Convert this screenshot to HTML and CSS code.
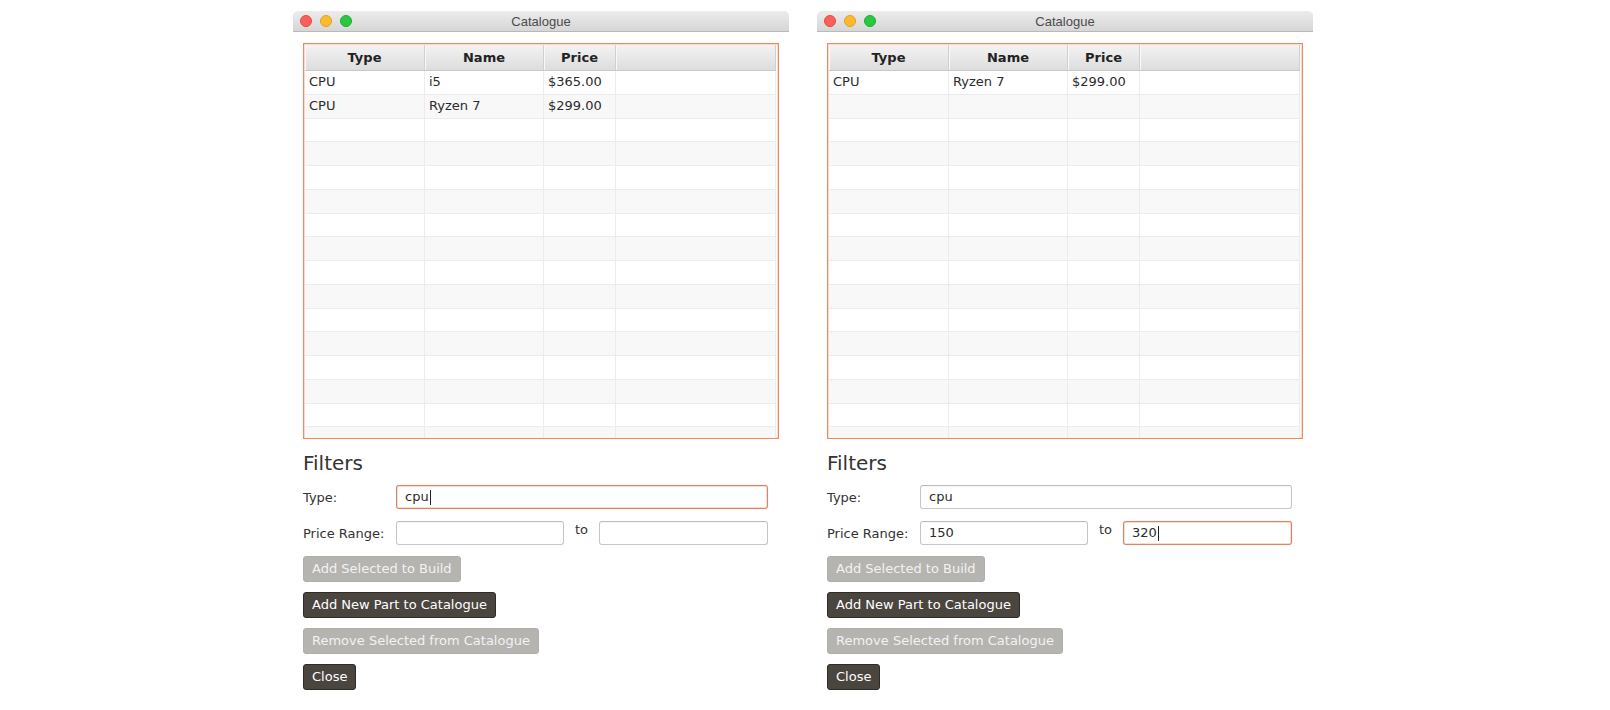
FILE: index.html
```html
<!DOCTYPE html>
<html>
<head>
<meta charset="utf-8">
<title>Catalogue</title>
<link rel="stylesheet" href="styles.css">
</head>
<body>
<div class="desktop">

  <div class="window">
    <div class="titlebar">
      <div class="lights"><span class="light red"></span><span class="light yellow"></span><span class="light green"></span></div>
      <div class="title">Catalogue</div>
    </div>
    <div class="content">
      <div class="table">
        <div class="thead">
          <div class="th">Type</div><div class="th">Name</div><div class="th">Price</div><div class="th"></div>
        </div>
        <div class="tbody">
          <div class="tr"><div class="td">CPU</div><div class="td">i5</div><div class="td">$365.00</div><div class="td"></div></div>
          <div class="tr"><div class="td">CPU</div><div class="td">Ryzen 7</div><div class="td">$299.00</div><div class="td"></div></div>
          <div class="tr"><div class="td"></div><div class="td"></div><div class="td"></div><div class="td"></div></div>
          <div class="tr"><div class="td"></div><div class="td"></div><div class="td"></div><div class="td"></div></div>
          <div class="tr"><div class="td"></div><div class="td"></div><div class="td"></div><div class="td"></div></div>
          <div class="tr"><div class="td"></div><div class="td"></div><div class="td"></div><div class="td"></div></div>
          <div class="tr"><div class="td"></div><div class="td"></div><div class="td"></div><div class="td"></div></div>
          <div class="tr"><div class="td"></div><div class="td"></div><div class="td"></div><div class="td"></div></div>
          <div class="tr"><div class="td"></div><div class="td"></div><div class="td"></div><div class="td"></div></div>
          <div class="tr"><div class="td"></div><div class="td"></div><div class="td"></div><div class="td"></div></div>
          <div class="tr"><div class="td"></div><div class="td"></div><div class="td"></div><div class="td"></div></div>
          <div class="tr"><div class="td"></div><div class="td"></div><div class="td"></div><div class="td"></div></div>
          <div class="tr"><div class="td"></div><div class="td"></div><div class="td"></div><div class="td"></div></div>
          <div class="tr"><div class="td"></div><div class="td"></div><div class="td"></div><div class="td"></div></div>
          <div class="tr"><div class="td"></div><div class="td"></div><div class="td"></div><div class="td"></div></div>
          <div class="tr"><div class="td"></div><div class="td"></div><div class="td"></div><div class="td"></div></div>
          <div class="tr"><div class="td"></div><div class="td"></div><div class="td"></div><div class="td"></div></div>
        </div>
      </div>
      <div class="filters-title">Filters</div>
      <div class="form">
        <div class="label">Type:</div>
        <div class="field wide focused">cpu<span class="caret"></span></div>
        <div class="label">Price Range:</div>
        <div class="field"></div>
        <div class="to">to</div>
        <div class="field"></div>
      </div>
      <div class="actions">
        <div class="btn disabled">Add Selected to Build</div>
        <div class="btn">Add New Part to Catalogue</div>
        <div class="btn disabled">Remove Selected from Catalogue</div>
        <div class="btn">Close</div>
      </div>
    </div>
  </div>

  <div class="window">
    <div class="titlebar">
      <div class="lights"><span class="light red"></span><span class="light yellow"></span><span class="light green"></span></div>
      <div class="title">Catalogue</div>
    </div>
    <div class="content">
      <div class="table">
        <div class="thead">
          <div class="th">Type</div><div class="th">Name</div><div class="th">Price</div><div class="th"></div>
        </div>
        <div class="tbody">
          <div class="tr"><div class="td">CPU</div><div class="td">Ryzen 7</div><div class="td">$299.00</div><div class="td"></div></div>
          <div class="tr"><div class="td"></div><div class="td"></div><div class="td"></div><div class="td"></div></div>
          <div class="tr"><div class="td"></div><div class="td"></div><div class="td"></div><div class="td"></div></div>
          <div class="tr"><div class="td"></div><div class="td"></div><div class="td"></div><div class="td"></div></div>
          <div class="tr"><div class="td"></div><div class="td"></div><div class="td"></div><div class="td"></div></div>
          <div class="tr"><div class="td"></div><div class="td"></div><div class="td"></div><div class="td"></div></div>
          <div class="tr"><div class="td"></div><div class="td"></div><div class="td"></div><div class="td"></div></div>
          <div class="tr"><div class="td"></div><div class="td"></div><div class="td"></div><div class="td"></div></div>
          <div class="tr"><div class="td"></div><div class="td"></div><div class="td"></div><div class="td"></div></div>
          <div class="tr"><div class="td"></div><div class="td"></div><div class="td"></div><div class="td"></div></div>
          <div class="tr"><div class="td"></div><div class="td"></div><div class="td"></div><div class="td"></div></div>
          <div class="tr"><div class="td"></div><div class="td"></div><div class="td"></div><div class="td"></div></div>
          <div class="tr"><div class="td"></div><div class="td"></div><div class="td"></div><div class="td"></div></div>
          <div class="tr"><div class="td"></div><div class="td"></div><div class="td"></div><div class="td"></div></div>
          <div class="tr"><div class="td"></div><div class="td"></div><div class="td"></div><div class="td"></div></div>
          <div class="tr"><div class="td"></div><div class="td"></div><div class="td"></div><div class="td"></div></div>
          <div class="tr"><div class="td"></div><div class="td"></div><div class="td"></div><div class="td"></div></div>
        </div>
      </div>
      <div class="filters-title">Filters</div>
      <div class="form">
        <div class="label">Type:</div>
        <div class="field wide">cpu</div>
        <div class="label">Price Range:</div>
        <div class="field">150</div>
        <div class="to">to</div>
        <div class="field focused">320<span class="caret"></span></div>
      </div>
      <div class="actions">
        <div class="btn disabled">Add Selected to Build</div>
        <div class="btn">Add New Part to Catalogue</div>
        <div class="btn disabled">Remove Selected from Catalogue</div>
        <div class="btn">Close</div>
      </div>
    </div>
  </div>

</div>
</body>
</html>
```

FILE: styles.css
```css
* { box-sizing: border-box; }

html, body {
  margin: 0;
  padding: 0;
  background: #ffffff;
}

body {
  font-family: "DejaVu Sans", Verdana, sans-serif;
  font-size: 13px;
  color: #333333;
}

.desktop {
  display: flex;
  gap: 28px;
  padding: 11px 0 0 293px;
}

.window {
  width: 496px;
  height: 686px;
  background: #ffffff;
}

.titlebar {
  position: relative;
  height: 21px;
  background: linear-gradient(#ececec, #d6d6d6);
  border-bottom: 1px solid #b9b9b9;
  border-radius: 5px 5px 0 0;
  display: flex;
  align-items: center;
  justify-content: center;
}

.lights {
  position: absolute;
  left: 7px;
  top: 4px;
  display: flex;
  gap: 8px;
}

.light {
  width: 12px;
  height: 12px;
  border-radius: 50%;
  display: block;
}
.light.red { background: #fc5f57; border: 1px solid #e14942; }
.light.yellow { background: #fdbb2e; border: 1px solid #dfa023; }
.light.green { background: #28c840; border: 1px solid #1dad2b; }

.title {
  font-family: "Liberation Sans", Arial, sans-serif;
  font-size: 13px;
  color: #4b4b4b;
}

.content {
  padding: 11px 10px 0 10px;
}

.table {
  height: 396px;
  border: 1px solid #f08a5d;
  box-shadow: inset 0 0 0 1px #fbd9c9;
  padding: 1px 2px 1px 1px;
  overflow: hidden;
  background: #ffffff;
}

.thead, .tr {
  display: grid;
  grid-template-columns: 120px 119px 72px 1fr;
}

.thead {
  height: 26px;
  background: linear-gradient(#f3f3f3, #dddddd);
  border-bottom: 1px solid #c9c9c9;
}

.th {
  font-weight: bold;
  color: #222222;
  font-size: 13px;
  text-align: center;
  line-height: 25px;
  border-right: 1px solid #d0d0d0;
  box-shadow: inset 1px 0 0 #f9f9f9;
}

.tbody {
  overflow: hidden;
}

.tr {
  height: 23.75px;
  border-bottom: 1px solid #ececec;
}

.tr:nth-child(even) {
  background: #f8f8f8;
}

.td {
  border-right: 1px solid #ececec;
  padding-left: 4px;
  line-height: 22.75px;
  color: #2b2b2b;
  white-space: nowrap;
}

.filters-title {
  margin-top: 12px;
  font-size: 20px;
  line-height: 24px;
  color: #333333;
}

.form {
  margin-top: 10px;
  width: 465px;
  display: grid;
  grid-template-columns: 93px 168px 35px 169px;
  row-gap: 12px;
}

.label {
  align-self: center;
  color: #333333;
}

.field {
  height: 24px;
  border: 1px solid #c6c6c6;
  border-top-color: #bcbcbc;
  border-radius: 3px;
  background: #ffffff;
  box-shadow: inset 0 1px 1px rgba(0,0,0,0.04);
  padding-left: 8px;
  line-height: 22px;
  color: #2b2b2b;
  display: flex;
  align-items: center;
}

.field.wide {
  grid-column: 2 / 5;
}

.field.focused {
  border: 1px solid #d6876a;
  box-shadow: inset 0 0 0 1px #f6ddd2, 0 0 1px #e9a486;
}

.caret {
  display: inline-block;
  width: 1px;
  height: 15px;
  background: #222222;
  margin-left: 1px;
}

.to {
  align-self: start;
  text-align: center;
  line-height: 16px;
  padding-top: 1px;
  color: #333333;
}

.actions {
  margin-top: 11px;
  display: flex;
  flex-direction: column;
  align-items: flex-start;
  gap: 10px;
}

.btn {
  height: 26px;
  line-height: 24px;
  padding: 0 8px;
  border-radius: 3px;
  background: #4a453f;
  border: 1px solid #2f2c28;
  color: #ffffff;
  white-space: nowrap;
}

.btn.disabled {
  background: #b6b4b1;
  border-color: #b0aeab;
  color: #f2f2f2;
}
```
